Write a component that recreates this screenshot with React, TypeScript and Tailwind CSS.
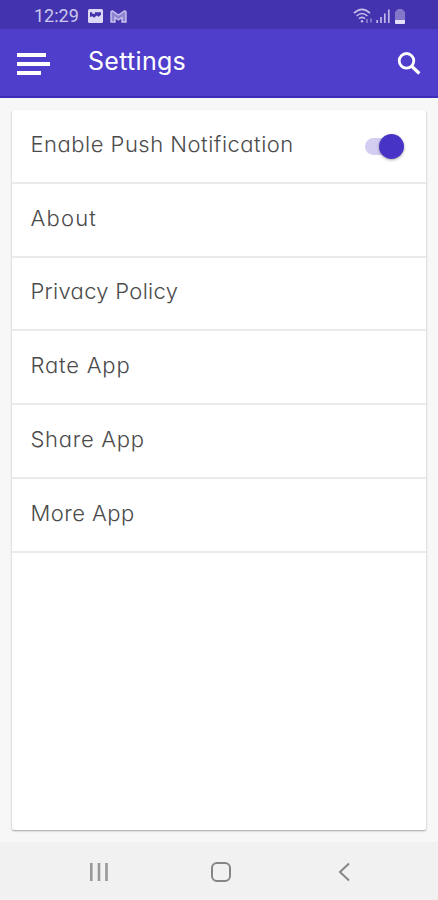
import { useState } from "react";

const links = [
  { label: "About", spacing: "tracking-[1.2px]" },
  { label: "Privacy Policy", spacing: "tracking-[0.3px]" },
  { label: "Rate App", spacing: "tracking-[0.8px]" },
  { label: "Share App", spacing: "tracking-[0.7px]" },
  { label: "More App", spacing: "tracking-[0.45px]" },
];

function StatusBar() {
  return (
    <div className="flex h-[29px] items-center bg-[#4333ae] pl-[34px] pr-[33px] pt-[3px] text-[#cdc8ef]">
      <span className="w-[54px] font-[Roboto,sans-serif] text-[18px] leading-none">12:29</span>
      <svg className="h-[14px] w-[15px]" viewBox="0 0 15 14">
        <rect width="15" height="14" rx="1.5" fill="#dcd8f6" />
        <path d="M2 8V3.2h2.2v1.6H7V3.2h6v2.6l-2.4 2-2-1.4-2.4 2.4-2-1.6z" fill="#4333ae" />
      </svg>
      <svg className="ml-[7px] h-[13px] w-[17px]" viewBox="0 0 17 13" fill="none" stroke="#c9c3ee">
        <path d="M1 12V2.2Q1 .8 2.5 1L8.5 5 14.5 1Q16 .8 16 2.2V12h-4V7.5l-3.5 2.5L5 7.5V12z" strokeWidth="1.4" fill="#8f84d2" />
      </svg>
      <div className="ml-auto flex items-center gap-[3px]">
        <svg className="h-[16px] w-[20px]" viewBox="0 0 20 16" fill="none" stroke="#c4bdea" strokeWidth="1.6">
          <path d="M1 5.2Q9 -2.5 17 5.2M3.6 8Q9 3 14.4 8M6 10.6Q9 8 12 10.6" />
          <circle cx="9" cy="13.2" r="1.2" fill="#c4bdea" stroke="none" />
          <path d="M14 11v4M18 10.5v4" stroke="#8b80cd" />
        </svg>
        <svg className="h-[16px] w-[14px]" viewBox="0 0 14 16" stroke="#bfb7e8" strokeWidth="1.7">
          <path d="M1.2 15v-3M5 15V9M8.8 15V5.5M12.8 15V1.5" />
        </svg>
        <svg className="ml-[2px] h-[16px] w-[10px]" viewBox="0 0 10 16">
          <path d="M0 4l3-3h4l3 3v8H0z" fill="#8277c9" />
          <path d="M0 12h10v3a1 1 0 0 1-1 1H1a1 1 0 0 1-1-1z" fill="#e5e1fa" />
        </svg>
      </div>
    </div>
  );
}

function Header() {
  return (
    <header className="flex h-[69px] items-center border-b-2 border-[#3d2bb9] bg-[#4f3dcb] pl-[17px] pr-[17px] text-white">
      <button className="mt-[3px] flex w-[71px] flex-col gap-[5px]">
        <span className="h-[4px] w-[29px] bg-white" />
        <span className="h-[4px] w-[33px] bg-white" />
        <span className="h-[4px] w-[24px] bg-white" />
      </button>
      <h1 className="mb-[3px] text-[25px] leading-none tracking-[0.3px]">Settings</h1>
      <button className="ml-auto mt-[2px]">
        <svg className="h-[23px] w-[24px]" viewBox="0 0 24 23" fill="none" stroke="#fff">
          <circle cx="9.5" cy="8.8" r="7.3" strokeWidth="2.8" />
          <path d="M14.5 14l7.8 7.5" strokeWidth="3.2" />
        </svg>
      </button>
    </header>
  );
}

function NavBar() {
  return (
    <nav className="flex h-[58px] items-center bg-[#f1f1f1] pl-[89px] pt-[2px]">
      <svg className="h-[20px] w-[20px]" viewBox="0 0 20 20" stroke="#999999" strokeWidth="2.6">
        <path d="M2.3 1v18M10 1v18M17.5 1v18" />
      </svg>
      <svg className="ml-[102px] h-[20px] w-[20px]" viewBox="0 0 20 20" fill="none" stroke="#858585" strokeWidth="2">
        <rect x="1" y="1" width="18" height="18" rx="5" />
      </svg>
      <svg className="ml-[107px] h-[20px] w-[12px]" viewBox="0 0 12 20" fill="none" stroke="#858585" strokeWidth="2">
        <path d="M11 1.5L2 10l9 8.5" />
      </svg>
    </nav>
  );
}

export default function App() {
  const [push, setPush] = useState(true);

  return (
    <div className="flex h-[900px] w-[438px] flex-col bg-[#f7f7f7] font-[Inter,sans-serif] [font-feature-settings:'cv11']">
      <StatusBar />
      <Header />

      <main className="mx-[12px] mb-[12px] mt-[12px] flex-1 rounded-[2px] bg-white text-[22px] font-light text-[#4b4b4b] shadow-[0_1px_2px_rgba(0,0,0,0.35)]">
        <div className="flex h-[73.8px] items-center border-b-2 border-[#ebebeb] pl-[18.5px] pr-[22px]">
          <span className="mb-[2px] tracking-[0.5px]">Enable Push Notification</span>
          <button
            onClick={() => setPush(!push)}
            className={`ml-auto mt-[2px] flex h-[17px] w-[39px] items-center rounded-full ${push ? "justify-end bg-[#d3cdf2]" : "bg-gray-300"}`}
          >
            <span className="h-[25px] w-[25px] rounded-full bg-[#4734c7] shadow-[0_1px_3px_rgba(0,0,0,0.35)]" />
          </button>
        </div>
        {links.map((link) => (
          <div key={link.label} className="flex h-[73.8px] items-center border-b-2 border-[#ebebeb] pl-[18.5px]">
            <span className={`mb-[3px] ${link.spacing}`}>{link.label}</span>
          </div>
        ))}
      </main>

      <NavBar />
    </div>
  );
}
